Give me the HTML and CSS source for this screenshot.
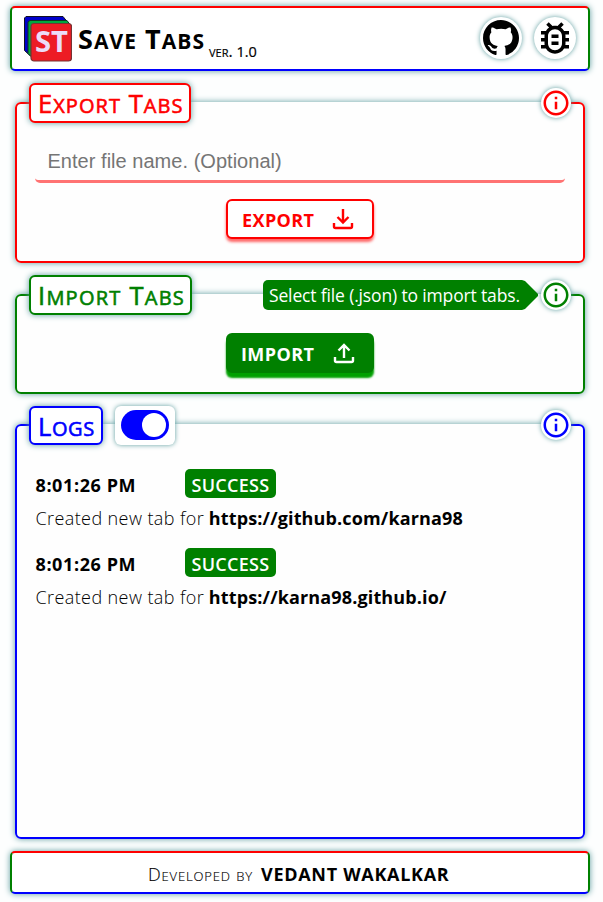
FILE: index.html
```html
<!DOCTYPE html>
<html lang="en">
<head>
<meta charset="utf-8">
<title>Save Tabs</title>
<link rel="stylesheet" href="styles.css">
</head>
<body>
<svg class="defs" width="0" height="0">
  <symbol id="info" viewBox="0 0 24 24"><path d="M11 7h2v2h-2zm0 4h2v6h-2zm1-9C6.480 2 2 6.480 2 12s4.480 10 10 10 10-4.480 10-10S17.520 2 12 2zm0 18c-4.410 0-8-3.590-8-8s3.590-8 8-8 8 3.590 8 8-3.590 8-8 8z"/></symbol>
</svg>
<header class="bar header">
  <svg class="logo" viewBox="0 0 48 46">
    <path d="M2 .5h37l4 5v34H6l-5.500-5V2z" fill="#00c" stroke="#112" stroke-width="1"/>
    <path d="M6 4.500h37l3 4v34H9l-5-5V6z" fill="#00a83e" stroke="#132" stroke-width="1"/>
    <rect x="7" y="7.500" width="40.500" height="37.500" rx="3" fill="#ed1c24" stroke="#733" stroke-width="1.200"/>
    <text x="27.500" y="36" text-anchor="middle" textLength="33" lengthAdjust="spacingAndGlyphs">ST</text>
  </svg>
  <h1 class="title">S<span class="sc">ave</span> T<span class="sc">abs</span></h1>
  <span class="version"><span class="sc">ver.</span> 1.0</span>
  <nav class="links">
    <a class="round"><svg width="36" height="36" viewBox="0 0 16 16"><path d="M8 0C3.580 0 0 3.580 0 8c0 3.540 2.290 6.530 5.470 7.590.4.070.55-.17.55-.38v-1.490c-2.010.37-2.530-.49-2.690-.94-.09-.23-.48-.94-.82-1.130-.28-.15-.68-.52-.01-.53.63-.01 1.080.58 1.230.82.72 1.210 1.870.87 2.330.66.070-.52.28-.87.51-1.070-1.780-.2-3.640-.89-3.640-3.950 0-.87.31-1.590.82-2.150-.08-.2-.36-1.020.08-2.120 0 0 .67-.21 2.200.82a7.600 7.600 0 0 1 4 0c1.530-1.040 2.200-.82 2.200-.82.44 1.100.16 1.920.08 2.120.51.56.82 1.270.82 2.150 0 3.070-1.870 3.750-3.650 3.950.29.25.54.73.54 1.480v2.200c0 .21.15.46.55.38A8 8 0 0 0 16 8c0-4.420-3.580-8-8-8z"/></svg></a>
    <a class="round"><svg width="42" height="42" viewBox="0 0 24 24"><path d="M20 8h-2.810c-.45-.78-1.070-1.450-1.820-1.960L17 4.410 15.590 3l-2.170 2.170C12.960 5.060 12.490 5 12 5s-.96.060-1.410.17L8.410 3 7 4.410l1.620 1.630C7.880 6.550 7.260 7.220 6.810 8H4v2h2.090c-.05.33-.09.66-.09 1v1H4v2h2v1c0 .34.040.67.090 1H4v2h2.810c1.040 1.790 2.970 3 5.190 3s4.150-1.210 5.190-3H20v-2h-2.090c.05-.33.090-.66.090-1v-1h2v-2h-2v-1c0-.34-.04-.67-.09-1H20V8zm-4 7c0 2.210-1.790 4-4 4s-4-1.790-4-4v-4c0-2.210 1.790-4 4-4s4 1.790 4 4v4zm-6-1h4v2h-4zm0-4h4v2h-4z"/></svg></a>
  </nav>
</header>

<fieldset class="panel export">
  <legend><h2 class="name">E<span class="sc">xport</span> T<span class="sc">abs</span></h2><span class="info"><svg viewBox="0 0 24 24"><use href="#info"/></svg></span></legend>
  <input class="file" type="text" placeholder="Enter file name. (Optional)">
  <button class="action"><span>EXPORT</span><svg width="22" height="21" viewBox="0 0 22 21"><path d="M11 0v13M5.500 8l5.500 5.500L16.500 8M2 14v3.500q0 1.500 1.500 1.500h15q1.500 0 1.500-1.500V14"/></svg></button>
</fieldset>

<fieldset class="panel import">
  <legend><h2 class="name">I<span class="sc">mport</span> T<span class="sc">abs</span></h2><span class="info"><span class="tip">Select file (.json) to import tabs.</span><svg viewBox="0 0 24 24"><use href="#info"/></svg></span></legend>
  <button class="action"><span>IMPORT</span><svg width="22" height="21" viewBox="0 0 22 21"><path d="M11 15V2M5.500 7.500L11 2l5.500 5.500M2 14v3.500q0 1.500 1.500 1.500h15q1.500 0 1.500-1.500V14"/></svg></button>
</fieldset>

<fieldset class="panel logs">
  <legend><h2 class="name">L<span class="sc">ogs</span></h2><span class="switch"><span class="track"></span></span><span class="info"><svg viewBox="0 0 24 24"><use href="#info"/></svg></span></legend>
  <div class="entry">
    <div class="head"><time>8:01:26 PM</time><span class="badge">SUCCESS</span></div>
    <p><span class="msg">Created new tab for</span> <b>https://github.com/karna98</b></p>
  </div>
  <div class="entry">
    <div class="head"><time>8:01:26 PM</time><span class="badge">SUCCESS</span></div>
    <p><span class="msg">Created new tab for</span> <b>https://karna98.github.io/</b></p>
  </div>
</fieldset>

<footer class="bar footer"><span class="by">Developed by</span><b>VEDANT WAKALKAR</b></footer>
</body>
</html>
```

FILE: styles.css
```css
* { box-sizing: border-box; }
body {
  margin: 0;
  padding: 6px 13px 0 10px;
  height: 902px;
  overflow: hidden;
  background: #fdfefe;
  font-family: "Open Sans", "Noto Sans", sans-serif;
  font-size: 18px;
  color: #000;
}
.defs { position: absolute; }
h1, h2, p { margin: 0; }
.sc { font-size: 1.1em; line-height: 1; font-variant: small-caps; }

.bar {
  display: flex;
  align-items: center;
  width: 580px;
  border: 2px solid;
  border-color: red green blue green;
  border-radius: 5px;
  background: #fff;
  box-shadow: 0 0 6px cadetblue;
}
.header { height: 65px; padding: 0 12px; }
.logo { width: 48px; height: 46px; }
.logo text { font: 700 28px "Open Sans", sans-serif; fill: #ecdcf8; }
.title {
  margin-left: 6px;
  width: 124px;
  font-size: 27px;
  line-height: 36px;
  letter-spacing: 1.05px;
  white-space: nowrap;
}
.version {
  margin: 26px 0 0 7px;
  font-size: 14.5px;
  line-height: 20px;
  letter-spacing: 0;
  white-space: nowrap;
  -webkit-text-stroke: .2px;
}
.links { display: flex; gap: 12px; margin-left: auto; margin-top: -1px; }
.round {
  display: flex;
  align-items: center;
  justify-content: center;
  width: 42px;
  height: 42px;
  border-radius: 50%;
  background: #fff;
  box-shadow: 0 0 5px cadetblue;
}

.panel {
  margin: 0 5px;
  width: 570px;
  padding: 0 18px;
  border: 2px solid var(--c);
  border-radius: 6px;
  background: #fefefe;
  box-shadow: 0 0 6px cadetblue;
  min-width: 0;
}
.export { --c: red; height: 180px; margin-top: 12px; }
.import { --c: green; height: 119px; margin-top: 12px; }
.logs { --c: blue; height: 433px; margin-top: 12px; }
legend {
  display: flex;
  align-items: center;
  width: 542px;
  height: 40px;
  margin-left: -6px;
  padding: 0;
}
.name {
  height: 40px;
  padding: 0 7px;
  border: 2px solid var(--c);
  border-radius: 6px;
  background: #fff;
  box-shadow: 0 0 6px cadetblue;
  color: var(--c);
  font-size: 25.5px;
  font-weight: 400;
  line-height: 37px;
  letter-spacing: 1.05px;
  white-space: nowrap;
  -webkit-text-stroke: .6px;
}
.export .name { width: 162px; }
.import .name { width: 163px; letter-spacing: 1.25px; }
.logs .name { width: 74px; height: 39px; letter-spacing: .6px; }
.logs legend { height: 38px; align-items: flex-start; }
.info {
  position: relative;
  display: flex;
  width: 30px;
  height: 30px;
  margin-left: auto;
  border-radius: 50%;
  background: #fff;
  box-shadow: 0 0 5px cadetblue;
  fill: var(--c);
}
.logs .info { margin-top: 4px; }
.info svg { width: 30px; height: 30px; }
.tip {
  position: absolute;
  right: 33px;
  top: 0;
  width: 275px;
  height: 30px;
  padding-left: 6px;
  border-radius: 5px 0 0 5px;
  background: green;
  clip-path: polygon(0 0, 259px 0, 262px 1px, 275px 14px, 275px 16px, 262px 29px, 259px 30px, 0 30px);
  color: #fff;
  font-size: 17.5px;
  line-height: 31px;
  letter-spacing: -.15px;
  white-space: nowrap;
}
.file {
  display: block;
  width: 530px;
  height: 43px;
  margin-top: 17px;
  padding: 2px 12px 0 12.5px;
  border: 0;
  border-bottom: 3px solid #ff7373;
  border-radius: 5px;
  background: #fefefe;
  font: 20px "Liberation Sans", sans-serif;
  letter-spacing: .03px;
}
.file::placeholder { color: #757575; }
.action {
  display: flex;
  align-items: center;
  justify-content: space-between;
  width: 148px;
  height: 40px;
  margin: 16px auto 0;
  padding: 1px 18px 0 14px;
  border: 2px solid red;
  border-radius: 6px;
  background: #fff;
  box-shadow: 0 3px 3px rgba(255, 0, 0, .6);
  color: red;
  font: 700 18px "Open Sans", sans-serif;
  letter-spacing: .4px;
}
.import .action {
  margin-top: 18px;
  padding: 1px 17px 0 13px;
  border-color: green;
  background: green;
  box-shadow: 0 5px 2px #00a000;
  color: #fff;
}
.action svg { fill: none; stroke: currentColor; stroke-width: 2.4; }
.switch {
  display: flex;
  align-items: center;
  justify-content: center;
  width: 60px;
  height: 39px;
  margin-left: 12px;
  border-radius: 6px;
  background: #fff;
  box-shadow: 0 0 5px cadetblue;
}
.track { display: flex; justify-content: flex-end; width: 48px; height: 30px; margin-top: -1px; padding: 3px; border-radius: 15px; background: blue; }
.track::after { content: ""; width: 24px; height: 24px; border-radius: 50%; background: #fff; }
.entry { height: 79px; padding-left: .5px; white-space: nowrap; }
.logs legend + .entry { margin-top: 25px; }
.head { display: flex; align-items: center; height: 29px; }
time { width: 149.5px; font-weight: 700; line-height: 30px; padding-top: 3px; letter-spacing: .6px; }
.badge { width: 91px; height: 29px; border-radius: 5px; background: green; color: #fff; font-weight: 600; line-height: 32px; text-align: center; letter-spacing: .3px; }
.entry p { margin-top: 7px; line-height: 26px; font-weight: 300; }
.msg { letter-spacing: .4px; }
.entry b { font-weight: 700; letter-spacing: .14px; }
.footer { height: 43px; margin-top: 12px; padding: 2px 0 0 136px; }
.footer b { letter-spacing: .7px; }
.by { width: 113px; font-weight: 300; font-variant: small-caps; letter-spacing: .85px; white-space: nowrap; -webkit-text-stroke: .15px; }
```
